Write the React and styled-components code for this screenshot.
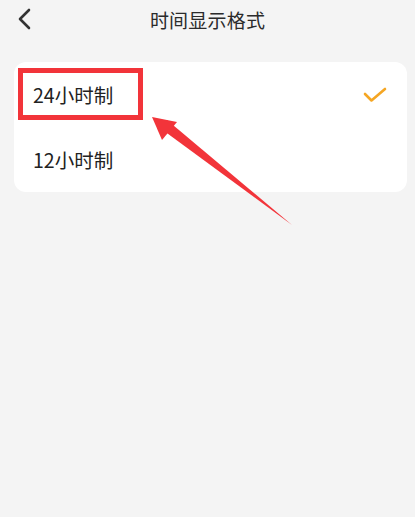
import React from 'react'
import styled, { createGlobalStyle } from 'styled-components'

const GlobalStyle = createGlobalStyle`
  html, body {
    margin: 0;
    padding: 0;
    background: #f4f4f4;
  }
  body {
    font-family: "Noto Sans CJK SC", "Noto Sans", sans-serif;
    color: #222;
  }
`

const Page = styled.div`
  width: 415px;
  height: 517px;
  background: #f4f4f4;
  position: relative;
  overflow: hidden;
`

const TopBar = styled.div`
  height: 38px;
  display: flex;
  align-items: center;
  justify-content: center;
  position: relative;
`

const BackButton = styled.button`
  position: absolute;
  left: 12px;
  top: 5px;
  width: 24px;
  height: 28px;
  padding: 0;
  border: 0;
  background: none;
  display: flex;
  align-items: center;
  justify-content: center;
`

const Title = styled.h1`
  margin: 0;
  font-size: 19px;
  font-weight: 400;
  color: #2b2b2b;
  letter-spacing: 0.2px;
`

const Card = styled.div`
  margin: 24px 8px 0 14px;
  background: #fff;
  border-radius: 12px;
  position: relative;
`

const Option = styled.div`
  height: 65px;
  display: flex;
  align-items: center;
  justify-content: space-between;
  padding: 0 20px 0 19px;
  font-size: 19.5px;
  color: #222;
`

const Highlight = styled.div`
  position: absolute;
  left: 4px;
  top: 6px;
  width: 115px;
  height: 42px;
  border: 5px solid #f2343a;
`

const Pointer = styled.svg`
  position: absolute;
  left: 0;
  top: 0;
  pointer-events: none;
`

const ChevronLeft = () => (
  <svg width="14" height="22" viewBox="0 0 14 22">
    <path d="M12 2 L3 11 L12 20" fill="none" stroke="#333" strokeWidth="2.6" strokeLinecap="round" strokeLinejoin="round" />
  </svg>
)

const Check = () => (
  <svg width="24" height="16" viewBox="0 0 24 16">
    <path d="M2 7 L8.5 13.5 L22 2" fill="none" stroke="#f5a623" strokeWidth="2.6" strokeLinecap="round" strokeLinejoin="round" />
  </svg>
)

const options = [
  { label: '24小时制', selected: true },
  { label: '12小时制', selected: false },
]

export default function App() {
  return (
    <Page>
      <GlobalStyle />
      <TopBar>
        <BackButton aria-label="返回">
          <ChevronLeft />
        </BackButton>
        <Title>时间显示格式</Title>
      </TopBar>
      <Card>
        {options.map((o) => (
          <Option key={o.label}>
            <span>{o.label}</span>
            {o.selected && <Check />}
          </Option>
        ))}
        <Highlight />
      </Card>
      <Pointer width="415" height="517" viewBox="0 0 415 517">
        {/* tapered shaft plus head */}
        <polygon points="292,225 160,128 167,120" fill="#f2343a" />
        <polygon points="152,117 177,122 162,140" fill="#f2343a" />
      </Pointer>
    </Page>
  )
}
